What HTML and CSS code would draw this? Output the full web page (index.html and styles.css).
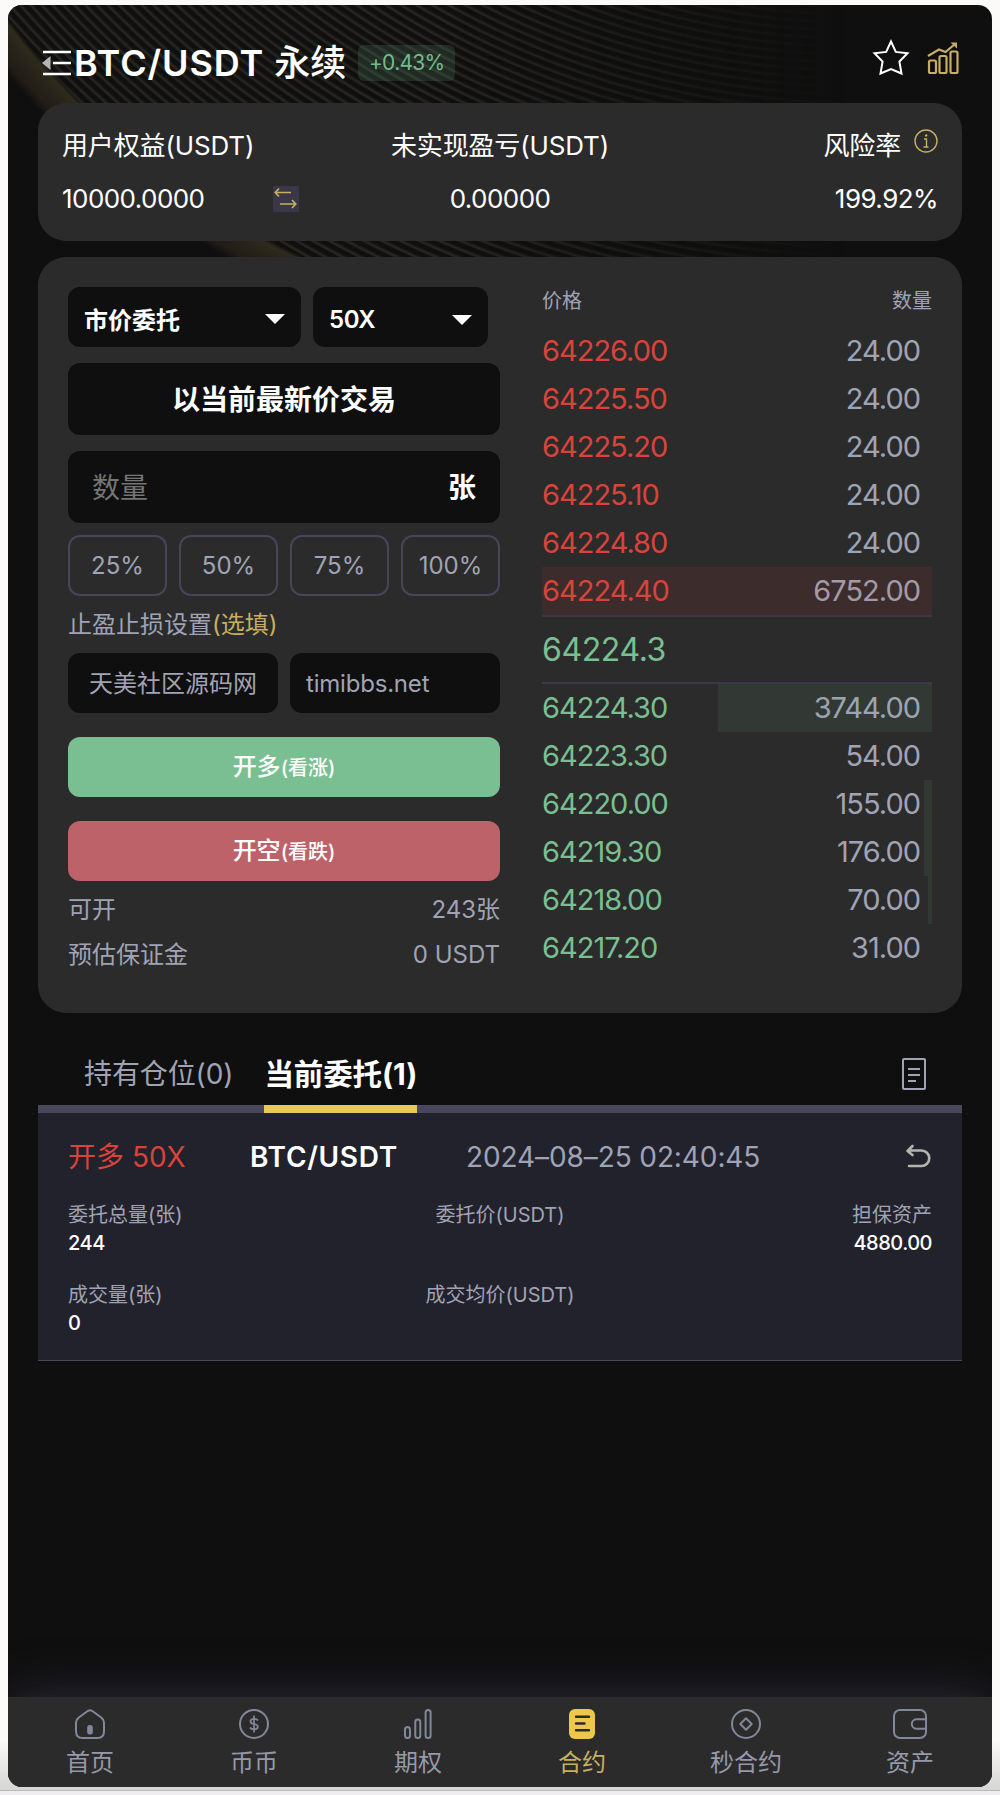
FILE: index.html
```
<!DOCTYPE html>
<html lang="zh-CN">
<head>
    <meta charset="UTF-8">
    <meta name="viewport" content="width=device-width, initial-scale=1.0">
    <title>BTC/USDT 永续</title>
    <link rel="stylesheet" href="styles.css">
</head>
<body>

    <div class="app">
        <header class="header">
            <svg class="icon-menu" width="30" height="28" viewBox="0 0 30 28">
                <path d="M1 3H29M11 14H29M1 25H29" stroke="#fff" stroke-width="2.4" fill="none"/>
                <path d="M0 14L8.500 7V21Z" fill="#b5b5b5"/>
            </svg>
            <h1 class="pair">BTC/USDT <span class="pair-type">永续</span></h1>
            <span class="change">+0.43%</span>
            <div class="header-icons">
                <svg width="38" height="38" viewBox="0 0 38 38">
                    <path d="M19 2.500L23.800 12.900L35.500 14.200L27.400 22.500L29.500 34.500L19 30L8.500 34.500L10.600 22.500L2.500 14.200L14.200 12.900Z" fill="none" stroke="#fff" stroke-width="2"/>
                </svg>
                <svg width="34" height="36" viewBox="0 0 34 36" fill="none" stroke="#c8ae60" stroke-width="2.200">
                    <rect x="3" y="20.500" width="7" height="12.500" rx="1.500"/>
                    <rect x="13.500" y="16" width="7" height="17" rx="1.500"/>
                    <rect x="24.500" y="11.500" width="7" height="21.500" rx="1.500"/>
                    <path d="M2 16L13 9.500L19.500 12L29 4"/>
                    <path d="M24.500 2.500H31V8.500Z" fill="#c8ae60" stroke="none"/>
                </svg>
            </div>
        </header>

        <section class="account">
            <div class="account-col">
                <div class="account-label">用户权益(USDT)</div>
                <div class="account-value">
                    <span class="equity">10000.0000</span>
                    <svg class="icon-swap" width="26" height="26" viewBox="0 0 26 26" fill="none" stroke="#c8ae60" stroke-width="1.700">
                        <path d="M18 6.500H2.500M6 2.500L2.300 6.500L6 10.500"/>
                        <path d="M7 18H22.500M19 14L22.700 18L19 22"/>
                    </svg>
                </div>
            </div>
            <div class="account-col center">
                <div class="account-label">未实现盈亏(USDT)</div>
                <div class="account-value">0.00000</div>
            </div>
            <div class="account-col right">
                <div class="account-label">风险率
                    <svg class="icon-info" width="24" height="24" viewBox="0 0 24 24" fill="none" stroke="#c8ae60" stroke-width="1.400">
                        <circle cx="12" cy="12" r="11"/>
                        <path d="M10 10H12.500V18M9.500 18H14.500"/>
                        <circle cx="12.200" cy="6.500" r="1.200" fill="#c8ae60" stroke="none"/>
                    </svg>
                </div>
                <div class="account-value">199.92%</div>
            </div>
        </section>

        <section class="trade">
            <div class="order-form">
                <div class="selects">
                    <div class="select select-type">市价委托<i class="caret"></i></div>
                    <div class="select select-lever">50X<i class="caret"></i></div>
                </div>
                <div class="market-price">以当前最新价交易</div>
                <div class="amount"><span class="placeholder">数量</span><span class="unit">张</span></div>
                <div class="percents">
                    <div class="percent">25%</div>
                    <div class="percent">50%</div>
                    <div class="percent">75%</div>
                    <div class="percent">100%</div>
                </div>
                <div class="stop-title">止盈止损设置<span class="gold">(选填)</span></div>
                <div class="stop-inputs">
                    <div class="stop-input stop-center">天美社区源码网</div>
                    <div class="stop-input">timibbs.net</div>
                </div>
                <div class="btn btn-long">开多<small>(看涨)</small></div>
                <div class="btn btn-short">开空<small>(看跌)</small></div>
                <div class="info-row"><span>可开</span><span>243张</span></div>
                <div class="info-row"><span>预估保证金</span><span>0 USDT</span></div>
            </div>

            <div class="book">
                <div class="book-head"><span>价格</span><span>数量</span></div>
                <div class="asks">
                    <div class="book-row"><span class="price">64226.00</span><span>24.00</span></div>
                    <div class="book-row"><span class="price">64225.50</span><span>24.00</span></div>
                    <div class="book-row"><span class="price">64225.20</span><span>24.00</span></div>
                    <div class="book-row"><span class="price">64225.10</span><span>24.00</span></div>
                    <div class="book-row"><span class="price">64224.80</span><span>24.00</span></div>
                    <div class="book-row"><span class="price">64224.40</span><span>6752.00</span><i class="depth" style="width: 100%"></i></div>
                </div>
                <div class="last-price">64224.3</div>
                <div class="bids">
                    <div class="book-row"><span class="price">64224.30</span><span>3744.00</span><i class="depth" style="width: 55%"></i></div>
                    <div class="book-row"><span class="price">64223.30</span><span>54.00</span></div>
                    <div class="book-row"><span class="price">64220.00</span><span>155.00</span><i class="depth" style="width: 2%"></i></div>
                    <div class="book-row"><span class="price">64219.30</span><span>176.00</span><i class="depth" style="width: 2%"></i></div>
                    <div class="book-row"><span class="price">64218.00</span><span>70.00</span><i class="depth" style="width: 1%"></i></div>
                    <div class="book-row"><span class="price">64217.20</span><span>31.00</span></div>
                </div>
            </div>
        </section>

        <div class="tabs">
            <div class="tab">持有仓位(0)</div>
            <div class="tab active">当前委托(1)</div>
            <svg class="icon-doc" width="24" height="32" viewBox="0 0 24 32" fill="none" stroke="#a0a3b5" stroke-width="2">
                <rect x="1" y="1" width="22" height="30" rx="1"/>
                <path d="M6 11H18M6 17H18M6 23H14"/>
            </svg>
        </div>

        <section class="order">
            <div class="order-head">
                <span class="order-side">开多 50X</span>
                <span class="order-pair">BTC/USDT</span>
                <span class="order-time">2024–08–25 02:40:45</span>
                <svg width="28" height="26" viewBox="0 0 28 26" fill="none" stroke="#b4b4ae" stroke-width="2.600" stroke-linecap="round" stroke-linejoin="round">
                    <path d="M8.500 2L3.500 7L8.500 11M4 6.500H17.500A7.700 7.700 0 0 1 17.500 22H5"/>
                </svg>
            </div>
            <div class="order-grid">
                <div class="order-cell"><span>委托总量(张)</span><b>244</b></div>
                <div class="order-cell center"><span>委托价(USDT)</span></div>
                <div class="order-cell right"><span>担保资产</span><b>4880.00</b></div>
                <div class="order-cell"><span>成交量(张)</span><b>0</b></div>
                <div class="order-cell center"><span>成交均价(USDT)</span></div>
            </div>
        </section>

        <nav class="nav">
            <div class="nav-item">
                <svg width="34" height="30" viewBox="0 0 34 30" fill="none" stroke="#80889a" stroke-width="2">
                    <path d="M15 1.800Q17 0.500 19 1.800L28.500 8.800Q31 10.500 31 13.500V22Q31 29 24.500 29H9.500Q3 29 3 22V13.500Q3 10.500 5.500 8.800Z"/>
                    <rect x="15.200" y="17" width="3.600" height="7.500" rx="1.500" fill="#80889a"/>
                </svg>
                <span>首页</span>
            </div>
            <div class="nav-item">
                <svg width="34" height="30" viewBox="0 0 34 30" fill="none" stroke="#80889a" stroke-width="2">
                    <circle cx="17" cy="15" r="14"/>
                    <path d="M21 11.500Q20 9.800 17 9.800Q13.500 9.800 13.500 12.500Q13.500 14.600 17 15Q20.800 15.500 20.800 17.800Q20.800 20.300 17.200 20.300Q14 20.300 13 18.500M17 6.500V23.500" stroke-width="1.700"/>
                </svg>
                <span>币币</span>
            </div>
            <div class="nav-item">
                <svg width="34" height="30" viewBox="0 0 34 30" fill="none" stroke="#80889a" stroke-width="2">
                    <rect x="4" y="18" width="5" height="11" rx="2.500"/>
                    <rect x="14.300" y="10.500" width="5" height="18.500" rx="2.500"/>
                    <rect x="24.600" y="1" width="5" height="28" rx="2.500"/>
                </svg>
                <span>期权</span>
            </div>
            <div class="nav-item active">
                <svg width="34" height="30" viewBox="0 0 34 30" fill="none">
                    <rect x="4" y="0" width="26" height="30" rx="6" fill="#edc84c"/>
                    <path d="M11 7.800H24M11 14.500H19.500M11 21.200H24" stroke="#2b2b2b" stroke-width="2.400" stroke-linecap="round"/>
                </svg>
                <span>合约</span>
            </div>
            <div class="nav-item">
                <svg width="34" height="30" viewBox="0 0 34 30" fill="none" stroke="#80889a" stroke-width="2">
                    <circle cx="17" cy="15" r="14"/>
                    <path d="M17 9.300L22.700 15L17 20.700L11.300 15Z" stroke-linejoin="round"/>
                </svg>
                <span>秒合约</span>
            </div>
            <div class="nav-item">
                <svg width="34" height="30" viewBox="0 0 34 30" fill="none" stroke="#80889a" stroke-width="2">
                    <rect x="1" y="1" width="32" height="28" rx="6"/>
                    <path d="M33 10.300H23.500A4.700 4.700 0 0 0 23.500 19.700H33"/>
                </svg>
                <span>资产</span>
            </div>
        </nav>
    </div>

</body>
</html>
```

FILE: styles.css
```
* {
    margin: 0;
    padding: 0;
    box-sizing: border-box;
}
body {
    height: 1795px;
    padding: 5px 8px 0;
    overflow: hidden;
    background: linear-gradient(#fbfaf8 0, #fbfaf8 1740px, #d7d7d5 1788px, #d7d7d5 1790px, #b9b9bb 1790px, #b9b9bb 1791px, #efedf0 1791px);
    font-family: Inter, "Noto Sans CJK SC", sans-serif;
    color: #fff;
}
svg {
    display: block;
    flex: none;
}
.app {
    position: relative;
    display: flex;
    flex-direction: column;
    height: 1782px;
    padding: 0 30px;
    border-radius: 14px;
    overflow: hidden;
    background: #0f0f0f;
}

/* gold ribbon and curved stripes behind the header */
.app::before {
    content: "";
    position: absolute;
    inset: 0 0 auto 0;
    height: 300px;
    background:
        radial-gradient(circle at 626px -459px, transparent 784px, #2e2a1c 788px, #211c17 812px, transparent 820px),
        radial-gradient(circle at 626px -459px, transparent 784px, #0f0f0f 786px),
        repeating-radial-gradient(circle at 850px -740px, #0f0f0e 0, #0f0f0e 3px, #2a2823 6px, #0f0f0e 8px);
    -webkit-mask-image: linear-gradient(90deg, #000 45%, transparent 85%);
    mask-image: linear-gradient(90deg, #000 45%, transparent 85%);
}
.app > * {
    position: relative;
}

.header {
    display: flex;
    align-items: center;
    height: 98px;
    padding: 17px 0 0 4px;
}
.icon-menu {
    margin-right: 2px;
}
.pair {
    font-size: 36px;
    font-weight: 600;
    letter-spacing: 0.9px;
    line-height: 50px;
    white-space: nowrap;
}
.pair-type {
    font-weight: 500;
    letter-spacing: 0;
}
.change {
    margin-left: 12px;
    width: 97px;
    height: 36px;
    line-height: 36px;
    border-radius: 6px;
    background: rgba(114, 187, 141, 0.16);
    color: #72bb8d;
    font-size: 21px;
    letter-spacing: -0.7px;
    text-align: center;
}
.header-icons {
    display: flex;
    align-items: center;
    gap: 16px;
    margin: -10px 2px 0 auto;
}

.account {
    display: grid;
    grid-template-columns: 1fr 1fr 1fr;
    height: 138px;
    padding: 15px 24px 0;
    border-radius: 28px;
    background: #2b2b2b;
    font-size: 26px;
}
.account-col {
    display: flex;
    flex-direction: column;
    gap: 4px;
    white-space: nowrap;
}
.account-label, .account-value {
    display: flex;
    align-items: center;
    height: 51px;
}
.account-label {
    letter-spacing: -0.15px;
}
.account-value {
    letter-spacing: -0.55px;
}
.center {
    align-items: center;
}
.right {
    align-items: flex-end;
}
.icon-swap {
    margin-left: 69px;
    background: #3a3848;
}
.icon-info {
    margin: -5px 0 0 13px;
}

.trade {
    display: flex;
    justify-content: space-between;
    height: 756px;
    margin-top: 16px;
    padding: 30px;
    border-radius: 28px;
    background: #2b2b2b;
    color: #a0a3b5;
    font-size: 24px;
}
.order-form {
    width: 432px;
}
.selects {
    display: flex;
    gap: 12px;
}
.select {
    display: flex;
    align-items: center;
    justify-content: space-between;
    height: 60px;
    padding: 3px 16px 0;
    border-radius: 12px;
    background: #0f0f0f;
    color: #fff;
    font-weight: 700;
}
.select-type {
    width: 233px;
}
.select-lever {
    width: 175px;
    padding-top: 5px;
    font-weight: 600;
    letter-spacing: -0.4px;
}
.caret {
    border: 10px solid transparent;
    border-top-color: #fff;
    border-bottom: 0;
}
.market-price, .amount {
    display: flex;
    align-items: center;
    justify-content: center;
    height: 72px;
    margin-top: 16px;
    padding-bottom: 2px;
    border-radius: 12px;
    background: #0f0f0f;
    color: #fff;
    font-size: 28px;
    font-weight: 700;
}
.amount {
    justify-content: space-between;
    padding: 0 24px 2px;
}
.placeholder {
    color: #757575;
    font-weight: 400;
}
.percents {
    display: flex;
    gap: 12px;
    margin-top: 12px;
}
.percent {
    flex: 1;
    height: 61px;
    line-height: 58px;
    border: 2px solid #47455a;
    border-radius: 12px;
    text-align: center;
}
.stop-title {
    height: 57px;
    line-height: 58px;
}
.gold {
    color: #c8ae60;
}
.stop-inputs {
    display: flex;
    gap: 12px;
}
.stop-input {
    width: 210px;
    height: 60px;
    line-height: 62px;
    padding-left: 16px;
    border-radius: 12px;
    background: #0f0f0f;
    letter-spacing: -0.2px;
    white-space: nowrap;
}
.stop-center {
    padding-left: 0;
    letter-spacing: 0;
    text-align: center;
}
.btn {
    height: 60px;
    margin-top: 24px;
    line-height: 60px;
    border-radius: 12px;
    color: #fff;
    font-weight: 500;
    text-align: center;
}
.btn small {
    font-size: 20px;
}
.btn-long {
    background: #7abf92;
}
.btn-short {
    background: #be6269;
}
.info-row {
    display: flex;
    justify-content: space-between;
    height: 45px;
    line-height: 45px;
}
.btn-short + .info-row {
    margin-top: 6px;
}

.book {
    width: 390px;
}
.book-head {
    display: flex;
    justify-content: space-between;
    height: 40px;
    line-height: 29px;
    font-size: 20px;
}
.book-row {
    position: relative;
    display: flex;
    justify-content: space-between;
    height: 48px;
    padding-right: 12px;
    line-height: 48px;
    font-size: 29px;
    letter-spacing: -1px;
}
.depth {
    position: absolute;
    top: 0;
    right: 0;
    height: 100%;
}
.asks .price {
    color: #d8443a;
}
.asks .depth {
    background: rgba(216, 68, 58, 0.1);
}
.bids .price, .last-price {
    color: #7abf92;
}
.bids .depth {
    background: rgba(122, 191, 146, 0.1);
}
.last-price {
    height: 69px;
    line-height: 66px;
    border-top: 2px solid #3b3947;
    border-bottom: 2px solid #3b3947;
    font-size: 32px;
    letter-spacing: -0.4px;
}

.tabs {
    display: flex;
    height: 100px;
    padding-left: 46px;
    border-bottom: 8px solid #47485c;
    color: #a0a3b5;
    font-size: 28px;
    line-height: 122px;
}
.tab {
    letter-spacing: -0.1px;
}
.tab.active {
    height: 100px;
    width: 153px;
    margin-left: 31px;
    border-bottom: 8px solid #e8c85c;
    color: #fff;
    font-size: 29.5px;
    font-weight: 700;
    white-space: nowrap;
}
.icon-doc {
    margin: 45px 36px 0 auto;
}

.order {
    height: 248px;
    padding: 22px 30px 0;
    border-bottom: 1px solid #47485c;
    background: #22222c;
    color: #a0a3b5;
}
.order-head {
    display: flex;
    align-items: center;
    height: 44px;
    font-size: 28px;
    line-height: 44px;
    white-space: nowrap;
}
.order-side {
    width: 182px;
    color: #d8443a;
}
.order-pair {
    width: 216px;
    color: #fff;
    font-weight: 600;
    letter-spacing: 0.7px;
}
.order-time {
    letter-spacing: -0.1px;
}
.order-head svg {
    margin-left: auto;
}
.order-grid {
    display: grid;
    grid-template-columns: 1fr 1fr 1fr;
    grid-auto-rows: 80px;
    margin-top: 22px;
    font-size: 20px;
    line-height: 28px;
}
.order-cell {
    display: flex;
    flex-direction: column;
}
.order-cell b {
    color: #fff;
    font-weight: 500;
    letter-spacing: -0.5px;
}

.nav {
    display: flex;
    height: 90px;
    margin: auto -30px 0;
    background: #2b2b2b;
    box-shadow: 0 0 50px #2c2c3a;
    color: #9699a8;
    font-size: 24px;
}
.nav-item {
    flex: 1;
    display: flex;
    flex-direction: column;
    align-items: center;
    padding-top: 12px;
    line-height: 48px;
}
.nav-item.active {
    color: #c8ae60;
}
```
